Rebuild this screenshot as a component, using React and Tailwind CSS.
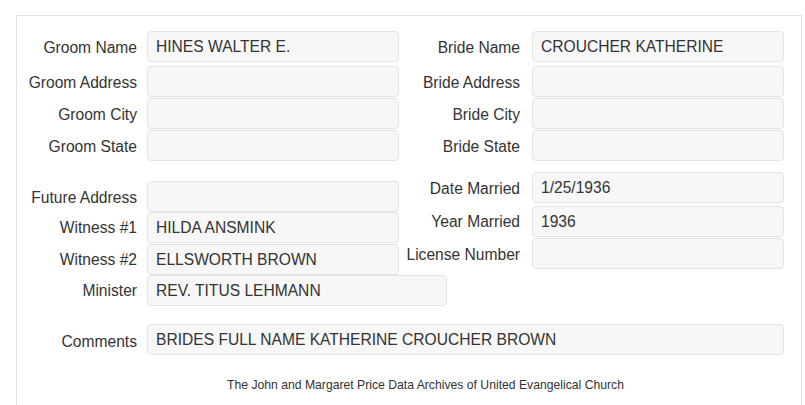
import React from 'react'

// one label + read-only value box, laid out on a row
const Field = ({ label, value, labelW = 'w-[120px]', gap = 'ml-[10px]', boxW = 'w-[252px]', row = '', lp = 'pt-[3px]' }) => (
  <div className={`flex items-center ${row}`}>
    <div className={`${labelW} shrink-0 text-right whitespace-nowrap ${lp}`}>{label}</div>
    <div
      className={`${gap} ${boxW} h-[31px] shrink-0 rounded-[4px] border border-[#e3e3e3] bg-[#f7f7f7] px-[8px] flex items-center whitespace-nowrap`}
    >
      {value}
    </div>
  </div>
)

function App() {
  return (
    <div className="min-h-screen bg-white font-['Liberation_Sans',Arial,sans-serif] text-[15.6px] leading-[18px] text-[#333]">
      <div className="ml-[16px] mt-[15px] w-[786px] border border-b-0 border-[#e3e3e3] pt-[15px] pb-[20px]">
        {/* groom / bride */}
        <div className="flex items-start">
          <div className="w-[383px] shrink-0">
            <Field label="Groom Name" value="HINES WALTER E." />
            <Field label="Groom Address" value="" row="mt-[4px]" />
            <Field label="Groom City" value="" row="mt-[1px]" />
            <Field label="Groom State" value="" row="mt-[1px]" />
          </div>
          <div>
            <Field label="Bride Name" value="CROUCHER KATHERINE" gap="ml-[12px]" />
            <Field label="Bride Address" value="" gap="ml-[12px]" row="mt-[4px]" />
            <Field label="Bride City" value="" gap="ml-[12px]" row="mt-[1px]" />
            <Field label="Bride State" value="" gap="ml-[12px]" row="mt-[1px]" />
          </div>
        </div>

        {/* address, witnesses, marriage details */}
        <div className="flex items-start">
          <div className="w-[383px] shrink-0 pt-[20px]">
            <Field label="Future Address" value="" />
            <Field label="Witness #1" value="HILDA ANSMINK" lp="pt-[1px]" />
            <Field label="Witness #2" value="ELLSWORTH BROWN" row="mt-[1px]" lp="pt-[1px]" />
            <Field label="Minister" value="REV. TITUS LEHMANN" boxW="w-[300px]" lp="pt-[1px]" />
          </div>
          <div className="pt-[11px]">
            <Field label="Date Married" value="1/25/1936" gap="ml-[12px]" />
            <Field label="Year Married" value="1936" gap="ml-[12px]" row="mt-[3px]" lp="pt-[1px]" />
            <Field label="License Number" value="" gap="ml-[12px]" row="mt-[1px]" lp="pt-[2px]" />
          </div>
        </div>

        <Field
          label="Comments"
          value="BRIDES FULL NAME KATHERINE CROUCHER BROWN"
          boxW="w-[637px]"
          row="mt-[18px]"
          lp="pt-[4px]"
        />

        <p className="mt-[23px] pl-[33px] text-center text-[12.2px] leading-[14px]">
          The John and Margaret Price Data Archives of United Evangelical Church
        </p>
      </div>
    </div>
  )
}

export default App
